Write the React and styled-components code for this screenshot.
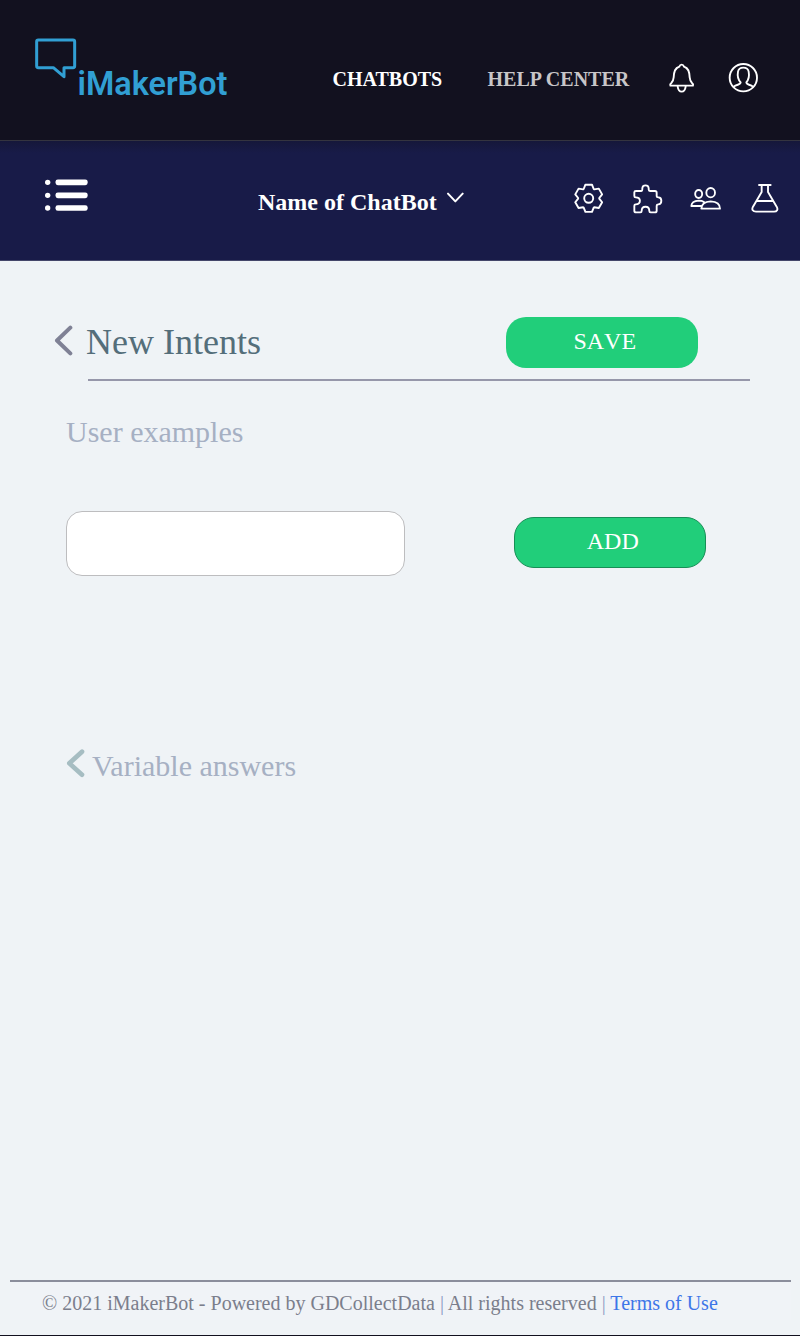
import React from "react";
import styled, { createGlobalStyle } from "styled-components";

const Global = createGlobalStyle`
  * { box-sizing: border-box; }
  body { margin: 0; background: #eff3f6; font-family: "Liberation Serif", "Times New Roman", serif; }
`;

const Page = styled.div`
  display: flex;
  flex-direction: column;
  width: 800px;
  height: 1336px;
  background: #eff3f6;
  border-bottom: 1px solid #12111f;
`;

const TopBar = styled.header`
  display: flex;
  align-items: flex-start;
  height: 141px;
  background: #12111f;
  border-bottom: 1px solid #34343f;
`;

const Logo = styled.a`
  display: flex;
  width: 193px;
  margin: 38px 0 0 35px;
  color: #319fd3;
`;

const LogoText = styled.span`
  margin: 27px 0 0 0.6px;
  font: 600 32.4px/38px Roboto, sans-serif;
  white-space: nowrap;
`;

const NavLink = styled.a`
  margin: 68px 0 0 ${(p) => p.$gap}px;
  width: ${(p) => p.$width}px;
  font-size: 20px;
  line-height: 23px;
  font-weight: bold;
  white-space: nowrap;
  color: ${(p) => (p.$active ? "#ffffff" : "#c8c6c8")};
`;

const Glyph = styled.svg`
  display: block;
  flex: none;
  margin: ${(p) => p.$top || 0}px 0 0 ${(p) => p.$left || 0}px;
  fill: none;
  stroke: currentColor;
  stroke-width: ${(p) => p.$stroke || 5.6};
  stroke-linecap: round;
  stroke-linejoin: round;
`;

const BotBar = styled.nav`
  display: flex;
  align-items: flex-start;
  height: 120px;
  color: #ffffff;
  background: linear-gradient(#15173a, #181b48 12px);
  border-bottom: 1px solid #44466a;
`;

const BotName = styled.div`
  width: 180px;
  margin: 47px 0 0 170px;
  font-size: 24px;
  line-height: 28px;
  font-weight: bold;
  white-space: nowrap;
`;

const Main = styled.main`
  flex: 1;
`;

const TitleRow = styled.div`
  display: flex;
  align-items: flex-start;
  height: 118px;
  padding: 55.7px 0 0 54px;
  color: #7f8195;
`;

const Title = styled.h1`
  width: 175px;
  margin: 4px 0 0 13px;
  font-size: 36px;
  line-height: 42px;
  font-weight: normal;
  white-space: nowrap;
  color: #546e7a;
`;

const Rule = styled.hr`
  width: 662.4px;
  height: 2px;
  margin: 0 0 0 88px;
  border: 0;
  background: #9697aa;
`;

const Button = styled.button`
  width: 192.5px;
  height: 51.3px;
  margin: 0 0 0 ${(p) => p.$left}px;
  padding: 0 0 2px 6px;
  border: ${(p) => (p.$outlined ? "1.5px solid #178f56" : "0")};
  border-radius: 20px;
  background: #21ce7a;
  color: #ffffff;
  font: 24px/28px "Liberation Serif", "Times New Roman", serif;
  font-kerning: none;
`;

const SectionTitle = styled.h2`
  margin: 0;
  font-size: 30px;
  line-height: 34px;
  font-weight: normal;
  color: #a6b0c3;
`;

const Examples = styled.section`
  padding: 34px 0 0 66px;
`;

const ExampleRow = styled.div`
  display: flex;
  align-items: flex-start;
  margin-top: 61.5px;
`;

const ExampleInput = styled.input`
  width: 339px;
  height: 65.5px;
  padding: 0 16px;
  border: 1.5px solid #bdbdbf;
  border-radius: 16px;
  background: #ffffff;
  font: 24px "Liberation Serif", serif;
`;

const AddSlot = styled.div`
  padding-top: 6px;
`;

const Answers = styled.section`
  display: flex;
  margin-top: 172px;
  padding-left: 66px;
  color: #a6bdc2;
`;

const AnswersTitle = styled(SectionTitle)`
  margin: 1px 0 0 7px;
`;

const Footer = styled.footer`
  height: 71px;
  margin: 0 9.5px;
  padding: 16px 0 0;
`;

const FooterText = styled.div`
  height: 40px;
  padding: 10px 0 0 32.5px;
  border-top: 2px solid #8b8e9c;
  background: #f0f3f7;
  font-size: 20px;
  line-height: 22px;
  white-space: nowrap;
  color: #7b7e8c;
`;

const Divider = styled.span`
  color: #8a9ac4;
`;

const Terms = styled.a`
  color: #3d76e8;
`;

const gearPath = () => {
  const tooth = [[-5, -9.3], [-3.3, -13.6], [3.3, -13.6], [5, -9.3]];
  const points = [];
  for (let i = 0; i < 6; i += 1) {
    const a = (i * Math.PI) / 3;
    tooth.forEach(([x, y]) => {
      points.push(`${(x * Math.cos(a) - y * Math.sin(a)).toFixed(2)} ${(x * Math.sin(a) + y * Math.cos(a)).toFixed(2)}`);
    });
  }
  return `M${points.join("L")}Z`;
};

export default function App() {
  return (
    <Page>
      <Global />
      <TopBar>
        <Logo>
          <Glyph width="42" height="41" viewBox="45 54 126 123" $stroke={9}>
            <path d="M55 60H159Q164 60 164 65V138Q164 143 159 143H132V170L100 143H55Q50 143 50 138V65Q50 60 55 60Z" />
          </Glyph>
          <LogoText>iMakerBot</LogoText>
        </Logo>
        <NavLink $active $gap={104.5} $width={110}>CHATBOTS</NavLink>
        <NavLink $gap={45} $width={142}>HELP CENTER</NavLink>
        <Glyph width="28" height="31" viewBox="54 39 84 93" $top={63} $left={38.5} color="#fff">
          <path d="M61 107Q59 103 64 99Q70 93 71 82C72 64 75 54 88 50Q90 44 95 44Q100 44 102 50C115 54 118 64 119 82Q120 93 126 99Q131 103 129 107ZM83 110Q85 125 95 125Q105 125 107 110" />
        </Glyph>
        <Glyph width="31" height="31" viewBox="234 36 93 93" $top={62} $left={32} color="#fff">
          <circle cx="280" cy="83" r="41" />
          <path d="M251 110C260 102 272 106 272 97C263 88 262 76 264 65C267 49 293 49 296 65C298 76 297 88 289 97C289 106 300 102 309 110" />
        </Glyph>
      </TopBar>
      <BotBar>
        <Glyph width="43" height="34" viewBox="75 144 129 102" $top={37} $left={45}>
          {[157, 196, 234].map((y) => (
            <g key={y} fill="currentColor" stroke="none">
              <circle cx="83" cy={y} r="8" />
              <rect x="106.500" y={y - 8.5} width="96.500" height="17" rx="7" />
            </g>
          ))}
        </Glyph>
        <BotName>Name of ChatBot</BotName>
        <Glyph width="17" height="11" viewBox="591 66 51 33" $top={51} $left={9} $stroke={6}>
          <path d="M594 71L616 94L638 71" />
        </Glyph>
        <Glyph width="30" height="31" viewBox="-15.7 -15.3 30 31" $top={42} $left={109} $stroke={1.9}>
          <path d={gearPath()} />
          <circle r="4.5" />
        </Glyph>
        <Glyph width="31" height="31" viewBox="216 39 93 93" $top={42} $left={28.5}>
          <path d="M223 67Q223 63 228 63H244Q247 63 247 58V54Q248 46 256.500 46Q265 46 266 54V58Q266 63 270 63H285Q290 63 290 68V79Q290 82 295 82C307 82 307 103 295 103Q290 103 290 107V122Q290 127 285 127H272Q268 127 268 123C268 106 245 106 245 123Q245 127 241 127H228Q223 127 223 122V107Q223 103 227 103C244 103 244 82 227 82Q223 82 223 78Z" />
        </Glyph>
        <Glyph width="32" height="25" viewBox="390 48 96 75" $top={45} $left={27}>
          <ellipse cx="416" cy="72" rx="10.500" ry="12" />
          <ellipse cx="452" cy="68" rx="13" ry="14" />
          <path d="M424 108H394Q395 93 416 92Q426 92 432 96M424 116H480Q480 95 452 94Q425 95 424 116Z" />
        </Glyph>
        <Glyph width="28" height="31" viewBox="573 39 84 93" $top={42} $left={29}>
          <path d="M597 45H632M605 45V66L579 110C574 119 579 125 588 125H642C651 125 655 119 650 110L624 66V45M589 93H640" />
        </Glyph>
      </BotBar>
      <Main>
        <TitleRow>
          <Glyph width="19" height="31" viewBox="42 75 57 93" $top={8.5} $stroke={12}>
            <path d="M91 83L51 121.500L91 160" />
          </Glyph>
          <Title>New Intents</Title>
          <Button $left={244.5}>SAVE</Button>
        </TitleRow>
        <Rule />
        <Examples>
          <SectionTitle>User examples</SectionTitle>
          <ExampleRow>
            <ExampleInput aria-label="User example" />
            <AddSlot>
              <Button $outlined $left={108.5}>ADD</Button>
            </AddSlot>
          </ExampleRow>
        </Examples>
        <Answers>
          <Glyph width="19" height="30" viewBox="48 39 57 90" $stroke={14}>
            <path d="M96 50L58 85L96 119" />
          </Glyph>
          <AnswersTitle>Variable answers</AnswersTitle>
        </Answers>
      </Main>
      <Footer>
        <FooterText>
          © 2021 iMakerBot - Powered by GDCollectData <Divider>|</Divider> All rights reserved <Divider>|</Divider> <Terms>Terms of Use</Terms>
        </FooterText>
      </Footer>
    </Page>
  );
}
